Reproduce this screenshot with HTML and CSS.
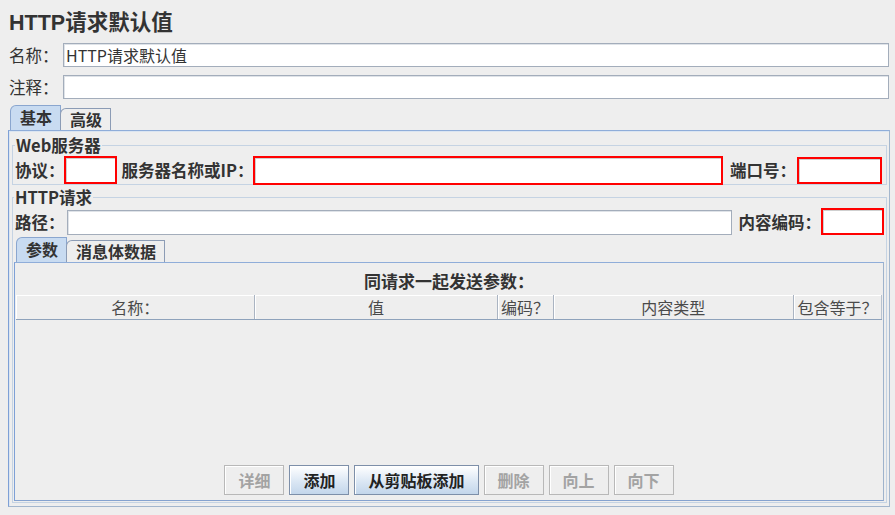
FILE: index.html
```html
<!DOCTYPE html>
<html lang="zh-CN">
<head>
<meta charset="utf-8">
<title>HTTP请求默认值</title>
<link rel="stylesheet" href="styles.css">
</head>
<body>
<div class="app">
  <h1 class="title">HTTP请求默认值</h1>

  <div class="field-row">
    <label class="field-label">名称：</label>
    <input class="text" type="text" value="HTTP请求默认值">
  </div>
  <div class="field-row field-row-last">
    <label class="field-label">注释：</label>
    <input class="text" type="text" value="">
  </div>

  <div class="tabs">
    <div class="tab-strip">
      <span class="tab active">基本</span>
      <span class="tab">高级</span>
    </div>
    <div class="tab-panel">

      <fieldset class="group group-web">
        <legend>Web服务器</legend>
        <div class="form-row row-server">
          <label class="lbl lbl-proto">协议：</label>
          <input class="text invalid in-proto" type="text">
          <label class="lbl lbl-host">服务器名称或IP：</label>
          <input class="text invalid in-host" type="text">
          <label class="lbl lbl-port">端口号：</label>
          <input class="text invalid in-port" type="text">
        </div>
      </fieldset>

      <fieldset class="group group-http">
        <legend>HTTP请求</legend>
        <div class="form-row row-path">
          <label class="lbl lbl-path">路径：</label>
          <input class="text in-path" type="text">
          <label class="lbl lbl-enc">内容编码：</label>
          <input class="text invalid in-enc" type="text">
        </div>

        <div class="tabs inner-tabs">
          <div class="tab-strip">
            <span class="tab active">参数</span>
            <span class="tab">消息体数据</span>
          </div>
          <div class="tab-panel inner-panel">
            <div class="caption">同请求一起发送参数：</div>
            <div class="table-head">
              <div class="th">名称：</div>
              <div class="th">值</div>
              <div class="th">编码？</div>
              <div class="th">内容类型</div>
              <div class="th">包含等于？</div>
            </div>
            <div class="table-body"></div>
            <div class="button-bar">
              <button class="btn" disabled>详细</button>
              <button class="btn">添加</button>
              <button class="btn">从剪贴板添加</button>
              <button class="btn" disabled>删除</button>
              <button class="btn" disabled>向上</button>
              <button class="btn" disabled>向下</button>
            </div>
          </div>
        </div>
      </fieldset>

    </div>
  </div>
</div>
</body>
</html>
```

FILE: styles.css
```css
* {
  box-sizing: border-box;
}

html,
body {
  margin: 0;
  height: 100%;
}

body {
  background: #eeeeee;
  color: #333333;
  font-family: "Noto Sans CJK SC", "Liberation Sans", sans-serif;
  font-size: 16px;
}

.app {
  height: 100vh;
  display: flex;
  flex-direction: column;
  padding: 9px 5px 8px 8px;
}

.title {
  margin: 0 0 6px 1px;
  height: 28px;
  font-family: "Liberation Sans", "Noto Sans CJK SC", sans-serif;
  font-size: 21.5px;
  line-height: 28px;
  font-weight: bold;
  color: #333333;
}

/* name / comment rows */
.field-row {
  display: flex;
  align-items: center;
  height: 24px;
  margin: 0 1px 8px 1px;
}

.field-row-last {
  margin-bottom: 6px;
}

.field-label {
  width: 54px;
  font-size: 16.5px;
  line-height: 24px;
  color: #333333;
}

.text {
  height: 100%;
  flex: 1;
  min-width: 0;
  margin: 0;
  padding: 0 2px;
  border: 1px solid #a3adbb;
  box-shadow: inset 1px 1px 0 #dfe3e8;
  background: #ffffff;
  color: #333333;
  font-family: inherit;
  font-size: 16px;
  outline: none;
}

.text.invalid {
  border: 2px solid #ff0000;
  box-shadow: inset 1px 1px 0 #cfcfcf;
}

/* tabbed panes */
.tabs {
  flex: 1;
  display: flex;
  flex-direction: column;
  min-height: 0;
}

.tab-strip {
  display: flex;
  align-items: flex-end;
  height: 25px;
  padding-left: 2px;
}

.tab {
  height: 22px;
  padding: 0 8px 0 9px;
  border: 1px solid #8c9cb5;
  border-bottom: none;
  border-top-left-radius: 6px;
  background: #eeeeee;
  font-size: 16px;
  font-weight: bold;
  line-height: 21px;
  color: #333333;
}

.tab + .tab {
  margin-left: -1px;
}

.tab.active {
  height: 25px;
  line-height: 23px;
  background: #c8dbf1;
  border-color: #8aa6cf;
}

.tab-panel {
  flex: 1;
  display: flex;
  flex-direction: column;
  min-height: 0;
  padding: 5px 2px 3px 3px;
  border: 1px solid;
  border-color: #8fadd9 #a3b6cd #a3b6cd #7ea0d6;
  box-shadow: inset 1px 1px 0 #dbe5f1;
}

/* titled groups */
.group {
  margin: 0;
  min-width: 0;
  border: 1px solid #c5d3e3;
}

.group legend {
  padding: 0 1px;
  font-size: 16.5px;
  line-height: 18px;
  font-weight: bold;
  color: #333333;
}

.group-web {
  padding: 2px 4px 0 2px;
}

.group-http {
  flex: 1;
  display: flex;
  flex-direction: column;
  margin-top: 3px;
  padding: 2px 2px 1px 1px;
}

.form-row {
  display: flex;
  align-items: center;
}

.lbl {
  font-size: 16.5px;
  font-weight: bold;
  color: #333333;
  white-space: nowrap;
}

.row-server {
  height: 28px;
}

.row-server .text {
  height: 28px;
}

.lbl-proto {
  margin-right: -1px;
}

.in-proto {
  flex: 0 0 53px;
  margin-right: 5px;
}

.in-host {
  height: 29px !important;
  margin-right: 7px;
}

.lbl-port {
  margin-right: 1px;
}

.in-port {
  flex: 0 0 85px;
  height: 27px !important;
}

.row-path {
  height: 27px;
  padding-left: 1px;
  margin-bottom: 2px;
}

.lbl-path {
  margin-right: 2px;
}

.in-path {
  height: 25px;
  margin-top: 2px;
  margin-right: 7px;
}

.in-enc {
  flex: 0 0 63px;
  height: 27px;
}

/* nested parameter tabs */
.inner-panel {
  padding: 0 1px 5px 1px;
  border-color: #8fadd9 #9fb3cc #86a3cf #7ea0d6;
  box-shadow: none;
}

.caption {
  height: 32px;
  padding-top: 4px;
  line-height: 28px;
  text-align: center;
  font-size: 17px;
  font-weight: bold;
  color: #333333;
}

.table-head {
  display: grid;
  grid-template-columns: 239fr 242fr 56fr 240fr 88fr;
  height: 25px;
  border-bottom: 1px solid #8ea2bb;
}

.th {
  border-right: 1px solid #aab4c2;
  box-shadow: inset 1px 1px 0 #ffffff;
  text-align: center;
  line-height: 24px;
  font-size: 16px;
  color: #4a4a4a;
}

.th:last-child {
  border-right: 1px solid #b8c2ce;
}

.table-body {
  flex: 1;
}

.button-bar {
  display: flex;
  justify-content: center;
  gap: 5px;
  height: 30px;
}

.btn {
  min-width: 60px;
  height: 30px;
  padding: 0 13px;
  border: 1px solid #7d8fa9;
  box-shadow: inset 1px 1px 0 #ffffff;
  background: linear-gradient(#ffffff, #dbe7f4 55%, #c3d6eb);
  color: #222222;
  font-family: inherit;
  font-size: 16px;
  font-weight: bold;
}

.btn:disabled {
  border-color: #b8b8b8;
  background: #eeeeee;
  color: #a3a3a3;
}
```
